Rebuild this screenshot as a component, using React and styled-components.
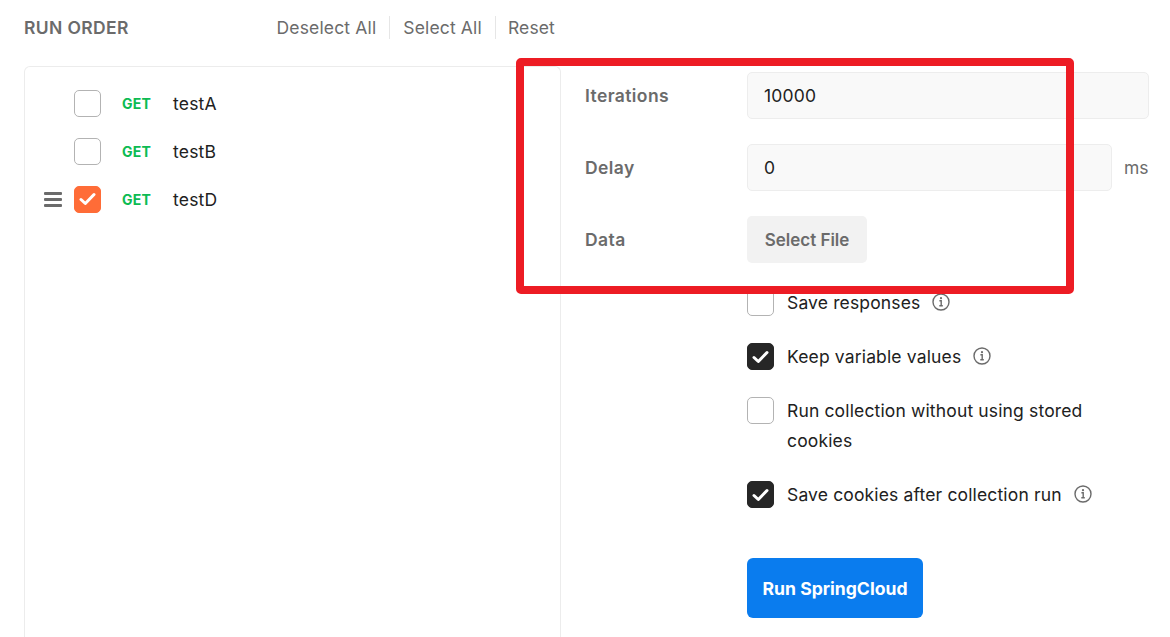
import React from "react";
import styled, { createGlobalStyle } from "styled-components";

const Global = createGlobalStyle`
  html, body { margin: 0; padding: 0; background: #ffffff; }
  body { font-family: Inter, "Noto Sans", "Liberation Sans", sans-serif; color: #212121; }
  * { box-sizing: border-box; }
`;

const Page = styled.div`
  position: relative;
  width: 1170px;
  height: 637px;
  overflow: hidden;
  padding-left: 24px;
  display: flex;
  flex-direction: column;
`;

const Header = styled.div`
  width: 543px;
  height: 54px;
  display: flex;
  align-items: center;
`;

const Title = styled.div`
  font-size: 17.5px;
  font-weight: 600;
  letter-spacing: 0.35px;
  color: #6b6b6b;
`;

const Actions = styled.div`
  margin-left: auto;
  display: flex;
  align-items: center;
`;

const Action = styled.span`
  font-size: 17.5px;
  letter-spacing: 0.15px;
  color: #6b6b6b;
  padding: 0 ${(p) => (p.$last ? "12px" : "13px")};
  line-height: 23px;
  border-left: ${(p) => (p.$first ? "none" : "1px solid #e6e6e6")};
`;

const Main = styled.div`
  flex: 1;
  display: flex;
  align-items: stretch;
  padding-top: 12px;
`;

const ListPanel = styled.div`
  width: 537px;
  flex: none;
  border: 1px solid #ececec;
  border-bottom: none;
  border-radius: 6px 6px 0 0;
  padding-top: 12px;
  padding-left: 19px;
`;

const Row = styled.div`
  height: 48px;
  display: flex;
  align-items: center;
`;

const Handle = styled.div`
  width: 18px;
  height: 15px;
  margin-right: 12px;
  display: flex;
  flex-direction: column;
  justify-content: space-between;
  visibility: ${(p) => (p.$show ? "visible" : "hidden")};
  span {
    display: block;
    height: 3px;
    border-radius: 1px;
    background: #6b6b6b;
  }
`;

const Box = styled.div`
  width: 27px;
  height: 27px;
  flex: none;
  border-radius: 5px;
  border: 1px solid ${(p) => (p.$checked ? p.$color : "#b3b3b3")};
  background: ${(p) => (p.$checked ? p.$color : "#ffffff")};
  display: flex;
  align-items: center;
  justify-content: center;
`;

const Method = styled.span`
  width: 51px;
  margin-left: 21px;
  font-size: 14px;
  font-weight: 700;
  letter-spacing: 0.2px;
  color: #0cbb52;
`;

const Name = styled.span`
  font-size: 17.5px;
  letter-spacing: 0.2px;
  color: #212121;
`;

const Config = styled.div`
  flex: 1;
  padding-left: 24px;
  padding-right: 22px;
  padding-top: 6px;
  display: flex;
  flex-direction: column;
`;

const Fields = styled.div`
  display: grid;
  grid-template-columns: 162px 1fr;
  row-gap: 25px;
  align-items: center;
`;

const Label = styled.div`
  font-size: 17.5px;
  font-weight: 600;
  letter-spacing: 0.4px;
  color: #6b6b6b;
`;

const FieldWrap = styled.div`
  display: flex;
  align-items: center;
  gap: 12px;
`;

const Input = styled.div`
  height: 47px;
  flex: ${(p) => (p.$w ? "none" : "1")};
  width: ${(p) => (p.$w ? `${p.$w}px` : "auto")};
  background: #f9f9f9;
  border: 1px solid #ededed;
  border-radius: 5px;
  padding-left: 16px;
  display: flex;
  align-items: center;
  font-size: 17.5px;
  letter-spacing: 0.2px;
  color: #212121;
`;

const Unit = styled.span`
  font-size: 17.5px;
  color: #6b6b6b;
`;

const FileButton = styled.div`
  width: 120px;
  height: 47px;
  background: #f2f2f2;
  border-radius: 5px;
  display: flex;
  align-items: center;
  justify-content: center;
  font-size: 17px;
  font-weight: 600;
  color: #6b6b6b;
`;

const Options = styled.div`
  margin-left: 162px;
  margin-top: 25px;
  display: flex;
  flex-direction: column;
  gap: 24px;
`;

const Option = styled.div`
  display: flex;
  align-items: flex-start;
  gap: 13px;
  padding-top: 1px;
`;

const OptionText = styled.div`
  font-size: 17.5px;
  letter-spacing: 0.15px;
  line-height: 30px;
  color: #212121;
  max-width: ${(p) => (p.$max ? `${p.$max}px` : "none")};
  margin-top: -1px;
`;

const Info = styled.span`
  display: inline-flex;
  vertical-align: middle;
  margin-left: 12px;
  margin-top: -4px;
`;

const RunButton = styled.div`
  margin-left: 162px;
  margin-top: 48px;
  width: 176px;
  height: 60px;
  border-radius: 6px;
  background: #0a7cee;
  color: #ffffff;
  font-size: 17.6px;
  font-weight: 700;
  display: flex;
  align-items: center;
  justify-content: center;
`;

const Highlight = styled.div`
  position: absolute;
  left: 516px;
  top: 58px;
  width: 558px;
  height: 236px;
  border: 8px solid #ed1c24;
  border-radius: 5px;
  pointer-events: none;
`;

const Check = () => (
  <svg width="17" height="14" viewBox="0 0 17 14" fill="none">
    <path d="M2 7.5 L6.3 11.5 L15 2.5" stroke="#ffffff" strokeWidth="3" strokeLinecap="round" strokeLinejoin="round" />
  </svg>
);

const Checkbox = ({ checked, color = "#262626" }) => (
  <Box $checked={checked} $color={color}>
    {checked && <Check />}
  </Box>
);

const InfoIcon = () => (
  <Info>
    <svg width="18" height="18" viewBox="0 0 18 18" fill="none">
      <circle cx="9" cy="9" r="8" stroke="#6b6b6b" strokeWidth="1.4" />
      <circle cx="9" cy="5.2" r="1.1" fill="#6b6b6b" />
      <path d="M7.4 7.8 H9.2 V12.6 M7.3 12.8 H10.8" stroke="#6b6b6b" strokeWidth="1.4" />
    </svg>
  </Info>
);

const requests = [
  { name: "testA", checked: false },
  { name: "testB", checked: false },
  { name: "testD", checked: true },
];

const options = [
  { text: "Save responses", checked: false, info: true },
  { text: "Keep variable values", checked: true, info: true },
  { text: "Run collection without using stored cookies", checked: false, info: false, max: 310 },
  { text: "Save cookies after collection run", checked: true, info: true },
];

export default function App() {
  return (
    <>
      <Global />
      <Page>
        <Header>
          <Title>RUN ORDER</Title>
          <Actions>
            <Action $first>Deselect All</Action>
            <Action>Select All</Action>
            <Action $last>Reset</Action>
          </Actions>
        </Header>
        <Main>
          <ListPanel>
            {requests.map((r) => (
              <Row key={r.name}>
                <Handle $show={r.checked}>
                  <span />
                  <span />
                  <span />
                </Handle>
                <Checkbox checked={r.checked} color="#ff6c37" />
                <Method>GET</Method>
                <Name>{r.name}</Name>
              </Row>
            ))}
          </ListPanel>
          <Config>
            <Fields>
              <Label>Iterations</Label>
              <FieldWrap>
                <Input>10000</Input>
              </FieldWrap>
              <Label>Delay</Label>
              <FieldWrap>
                <Input $w={365}>0</Input>
                <Unit>ms</Unit>
              </FieldWrap>
              <Label>Data</Label>
              <FieldWrap>
                <FileButton>Select File</FileButton>
              </FieldWrap>
            </Fields>
            <Options>
              {options.map((o) => (
                <Option key={o.text}>
                  <Checkbox checked={o.checked} />
                  <OptionText $max={o.max}>
                    {o.text}
                    {o.info && <InfoIcon />}
                  </OptionText>
                </Option>
              ))}
            </Options>
            <RunButton>Run SpringCloud</RunButton>
          </Config>
        </Main>
        <Highlight />
      </Page>
    </>
  );
}
